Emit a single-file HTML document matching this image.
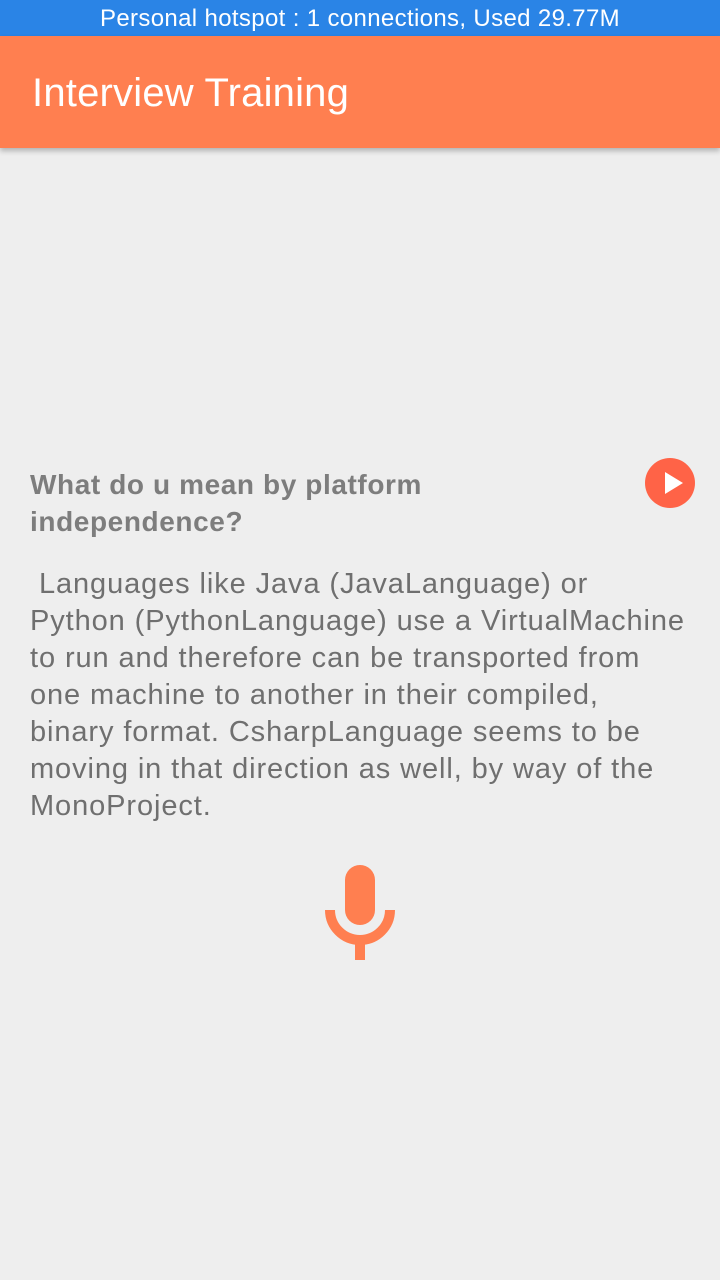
<!DOCTYPE html>
<html><head><meta charset="utf-8"><style>
*{margin:0;padding:0;box-sizing:border-box}
body{width:720px;height:1280px;background:#eeeeee;font-family:"Liberation Sans",sans-serif;position:relative;overflow:hidden}
.status{position:absolute;top:0;left:0;width:720px;height:36px;background:#2a84e6;color:#fff;font-size:24px;text-align:center;line-height:38px;letter-spacing:0.35px}
.bar{position:absolute;top:36px;left:0;width:720px;height:112px;background:#ff7f50;box-shadow:0 3px 5px rgba(0,0,0,.25)}
.bar h1{position:absolute;left:32px;top:35px;font-size:40px;font-weight:normal;color:#fff;letter-spacing:0.2px}
.q{position:absolute;left:30px;top:466px;font-size:28px;font-weight:bold;color:#7d7d7d;line-height:37px;letter-spacing:0.6px}
.a{position:absolute;left:30px;top:566px;font-size:29px;color:#6f6f6f;line-height:37px;white-space:nowrap;letter-spacing:0.9px}
</style></head><body>
<div class="status">Personal hotspot : 1 connections, Used 29.77M</div>
<div class="bar"><h1>Interview Training</h1></div>
<div class="q">What do u mean by platform<br>independence?</div>
<svg style="position:absolute;left:645px;top:458px" width="50" height="50"><circle cx="25" cy="25" r="25" fill="#ff6347"/><path d="M20 14 L38 25 L20 36Z" fill="#fff"/></svg>
<div class="a">&nbsp;Languages like Java (JavaLanguage) or<br>Python (PythonLanguage) use a VirtualMachine<br>to run and therefore can be transported from<br>one machine to another in their compiled,<br>binary format. CsharpLanguage seems to be<br>moving in that direction as well, by way of the<br>MonoProject.</div>
<svg style="position:absolute;left:320px;top:860px" width="80" height="105"><rect x="25" y="5" width="30" height="60" rx="15" fill="#ff7f50"/><path d="M10 50 A30 30 0 0 0 70 50" stroke="#ff7f50" stroke-width="10" fill="none"/><rect x="35" y="80" width="10" height="20" fill="#ff7f50"/></svg>
</body></html>
